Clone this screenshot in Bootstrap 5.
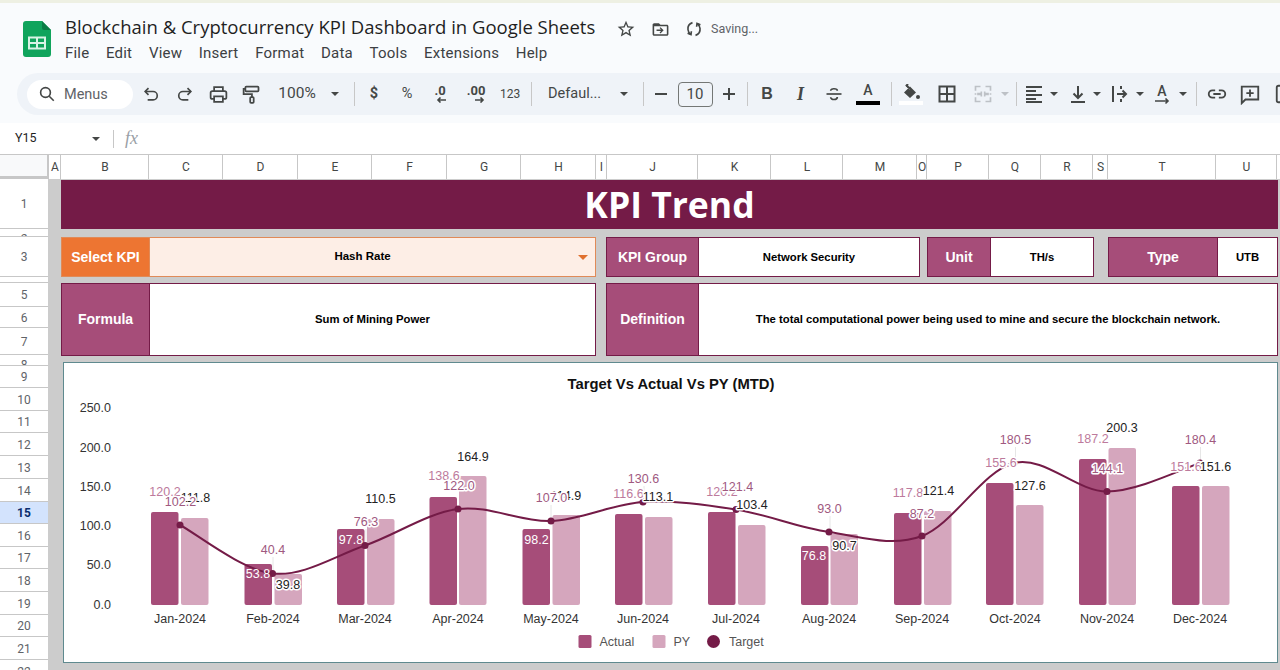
<!DOCTYPE html>
<html lang="en">
<head>
<meta charset="utf-8">
<title>Blockchain & Cryptocurrency KPI Dashboard</title>
<link href="https://cdn.jsdelivr.net/npm/bootstrap@5.3.0/dist/css/bootstrap.min.css" rel="stylesheet">
<style>
html,body{width:1280px;height:670px;overflow:hidden;background:#fff;}
body{font-family:Roboto,"Liberation Sans",sans-serif;color:#3c4043;}
svg{display:block;flex:none;}
.top-strip{height:3px;background:#eef0e3;}
.doc-head{height:120px;background:#f9fbfd;}
.head-row{height:70px;padding-left:23px;}
.logo-box{margin-top:18px;margin-right:14px;}
.title-col{padding-top:12px;}
.doc-title{font-family:"Open Sans",Roboto,sans-serif;font-size:18.5px;line-height:24px;width:531px;color:#1f1f1f;white-space:nowrap;}
.status{margin-left:20px;gap:15px;color:#444746;padding-top:4px;}
.saving{font-size:12.5px;color:#5f6368;margin-left:-7px;}
.menu-row{gap:16.7px;font-size:15px;letter-spacing:.2px;line-height:20px;margin-top:4px;color:#3c4043;}
.tool-strip{margin-left:17px;height:42px;padding-left:10px;background:#eff3f8;border-radius:21px 0 0 21px;display:grid;align-items:center;
 grid-template-columns:107px 34px 33px 34px 32px 60px 16px 22px 18px 48px 18px 54px 14px 29px 66px 24px 14px 21px 48px 20px 16px 24px 43px 24px 44px 2px 38px 34px 37px 8px 15px 20px 20px 27px 12px 34px 6px 38px 4px 23px 18px 48px 30px;}
.tcell{display:flex;justify-content:center;align-items:center;min-width:0;color:#444746;font-size:14.5px;white-space:nowrap;}
.search-pill{width:106px;height:29px;background:#fff;border-radius:15px;padding-left:11px;gap:8px;color:#5f6368;font-size:14.5px;justify-content:flex-start;}
.search-pill span{padding-top:1px;}
.tsep{width:1px;height:24px;background:#c7c7c7;justify-self:center;}
.pct{font-size:15.5px;}
.size-box{width:35px;height:25px;border:1px solid #747775;border-radius:4px;font-size:15px;display:flex;align-items:center;justify-content:center;}
.fnt-sm{font-size:12px;}
.fnt-a{font-size:14px;line-height:1;font-weight:500;}
.fnt-b{font-family:"Liberation Sans",sans-serif;font-weight:700;font-size:16px;}
.fnt-i{font-family:"Liberation Serif",serif;font-style:italic;font-weight:700;font-size:18px;}
.dec{font-weight:700;font-size:13px;line-height:12px;}
.defaul{justify-content:flex-start;padding-left:2px;font-size:14.5px;}
.caret{width:0;height:0;border-left:4.5px solid transparent;border-right:4.5px solid transparent;border-top:4.5px solid #444746;}
.caret.off{border-top-color:#bdc1c6;}
.fbar{height:31px;background:#fff;padding-left:15px;font-size:12.5px;color:#1f1f1f;}
.name-box{width:77px;}
.fbar-sep{width:1px;height:18px;background:#c7c7c7;margin-left:13px;margin-right:11px;}
.fx{font-family:"Liberation Serif",serif;font-style:italic;font-size:18px;color:#9aa0a6;}
.col-head{height:25px;border-top:1px solid #c7c7c7;display:grid;background:#fff;
 grid-template-columns:49px 12px 88px 74px 75px 74px 75px 74px 75px 11px 91px 73px 72px 74px 10px 62px 52px 52px 15px 108px 61px 3px;}
.col-cell{border-right:1px solid #c7c7c7;padding-left:1px;font-size:12px;color:#444746;display:flex;align-items:center;justify-content:center;}
.corner{background:#f8f9fa;border-right:2px solid #c7c7c7;border-bottom:3px solid #c7c7c7;}
.sheet{height:492px;background:#ccc;}
.row-head{width:48px;flex:none;background:#fff;display:grid;
 grid-template-rows:50px 8px 40px 6px 24px 21px 27px 11px 22px 23px 22px 23px 23px 23px 22px 23px 22px 23px 23px 22px 23px 23px;}
.row-cell{border-bottom:1px solid #c7c7c7;padding-top:1px;font-size:12px;line-height:14px;color:#5f6368;display:flex;align-items:center;justify-content:center;overflow:hidden;}
.row-cell.tiny{align-items:flex-start;padding-top:3px;}
.row-cell.now{background:#d3e3fd;color:#0b2e6e;font-weight:700;}
.sheet-body{padding-left:13px;padding-right:2px;padding-top:1px;width:1232px;}
.kpi-title{height:49px;background:#741b47;color:#fff;font-family:"Open Sans",sans-serif;font-weight:700;font-size:35.5px;line-height:49px;text-align:center;}
.kpi-row1{height:40px;margin-top:8px;}
.kpi-row2{height:73px;margin-top:6px;}
.tag{background:#a64d79;color:#fff;font-family:"Liberation Sans",sans-serif;font-weight:700;font-size:14px;display:flex;align-items:center;justify-content:center;border:1px solid #741b47;border-right:0;}
.val{background:#fff;color:#000;font-family:"Liberation Sans",sans-serif;font-weight:700;font-size:11.3px;display:flex;align-items:center;justify-content:center;border:1px solid #741b47;}
.tag.sel{background:#ed7532;border-color:#e08a58;}
.val.sel{background:#fdeee6;border-color:#e08a58;padding-right:20px;font-size:11.5px;}
.w-88{width:88px;flex:none}.w-447{width:447px;flex:none}.w-92{width:92px;flex:none}.w-222{width:222px;flex:none}
.w-63{width:63px;flex:none}.w-104{width:104px;flex:none}.w-109{width:109px;flex:none}.w-61{width:61px;flex:none}.w-580{width:580px;flex:none}
.gap-10{margin-left:10px}.gap-7{margin-left:7px}.gap-14{margin-left:14px}
.dd-arrow{width:0;height:0;border-left:5px solid transparent;border-right:5px solid transparent;border-top:5px solid #e0702e;}
.dd-hold{position:absolute;right:7px;top:17px;}
.chart-box{height:301px;margin-top:6px;margin-left:2px;background:#fff;border:1px solid #5f8a8f;overflow:hidden;}
.chart-box text{font-family:"Liberation Sans",sans-serif;font-size:12.5px;}
.chart-box .c-title{font-weight:700;font-size:14.8px;fill:#111;}
.chart-box .tick{fill:#333;}
.chart-box .leg{fill:#555;}
.bar-a{fill:#a64d79;}.bar-p{fill:#d5a6bd;}
.lb{text-anchor:middle;dominant-baseline:central;paint-order:stroke;stroke:#fff;stroke-width:3px;stroke-linejoin:round;}
.lb-a{fill:#bd7a9c;}.lb-t{fill:#a0597f;}.lb-p{fill:#222;}
.lb-w{fill:#fff;stroke:none;}
.lead{stroke:#e6e6e6;stroke-width:1;}
</style>
</head>
<body>
<div class="top-strip"></div>
<header class="doc-head">
  <div class="head-row d-flex">
    <div class="logo-box">
      <svg width="28" height="36" viewBox="0 0 28 36"><path d="M3 0H19L28 9V33a3 3 0 0 1-3 3H3a3 3 0 0 1-3-3V3a3 3 0 0 1 3-3z" fill="#10a45c"/><path d="M19 0L28 9H21a2 2 0 0 1-2-2z" fill="#0b7c45"/><rect x="6" y="16.5" width="16" height="11" fill="none" stroke="#d9f3e5" stroke-width="2"/><path d="M6 22H22M14 16.5V27.5" stroke="#d9f3e5" stroke-width="2"/></svg>
    </div>
    <div class="title-col">
      <div class="d-flex align-items-center">
        <div class="doc-title">Blockchain &amp; Cryptocurrency KPI Dashboard in Google Sheets</div>
        <div class="status d-flex align-items-center">
          <svg width="20" height="20" viewBox="0 0 24 24" fill="currentColor"><path d="M22 9.24l-7.19-.62L12 2 9.19 8.63 2 9.24l5.46 4.73L5.82 21 12 17.27 18.18 21l-1.63-7.03L22 9.24zM12 15.4l-3.76 2.27 1-4.28-3.32-2.88 4.38-.38L12 6.1l1.71 4.04 4.38.38-3.32 2.88 1 4.28L12 15.4z"/></svg>
          <svg width="19" height="19" viewBox="0 0 24 24" fill="currentColor"><path d="M20 6h-8l-2-2H4c-1.1 0-2 .9-2 2v12c0 1.1.9 2 2 2h16c1.1 0 2-.9 2-2V8c0-1.1-.9-2-2-2zm0 12H4V8h16v10z"/><path d="M12 9l-1.2 1.2 1.9 1.9H7v1.8h5.7l-1.9 1.9L12 17l4-4z"/></svg>
          <svg width="18" height="18" viewBox="0 0 24 24" fill="none" stroke="currentColor" stroke-width="2.2"><path d="M10 3.5C5.5 5 3.5 9 4 13c.3 2.5 1.5 4.5 3.500 6"/><path d="M3.500 17.500l4.500 2 .5-4.500"/><path d="M14 20.500c4.500-1.500 6.500-5.500 6-9.500-.3-2.500-1.500-4.500-3.500-6"/><path d="M20.500 6.500L16 4.500 15.500 9"/></svg>
          <span class="saving">Saving...</span>
        </div>
      </div>
      <nav class="menu-row d-flex">
        <span>File</span><span>Edit</span><span>View</span><span>Insert</span><span>Format</span><span>Data</span><span>Tools</span><span>Extensions</span><span>Help</span>
      </nav>
    </div>
  </div>
  <div class="tool-strip">
    <div class="tcell search-pill">
      <svg width="18" height="18" viewBox="0 0 24 24" fill="none" stroke="#444746" stroke-width="2.200"><circle cx="10" cy="10" r="6.500"/><path d="M15 15l6 6"/></svg><span>Menus</span>
    </div>
    <div class="tcell"><svg width="20" height="20" viewBox="0 0 24 24" fill="none" stroke="currentColor" stroke-width="2"><path d="M5 9h9.500a5 5 0 0 1 0 10H8"/><path d="M9 5L5 9l4 4"/></svg></div>
    <div class="tcell"><svg width="20" height="20" viewBox="0 0 24 24" fill="none" stroke="currentColor" stroke-width="2"><path d="M19 9H9.500a5 5 0 0 0 0 10H16"/><path d="M15 5l4 4-4 4"/></svg></div>
    <div class="tcell"><svg width="21" height="21" viewBox="0 0 24 24" fill="none" stroke="currentColor" stroke-width="2"><path d="M7 8V3.500h10V8"/><rect x="3" y="8" width="18" height="9" rx="2"/><path d="M7 14h10v6.500H7z" fill="#eff3f8"/></svg></div>
    <div class="tcell"><svg width="21" height="21" viewBox="0 0 24 24" fill="none" stroke="currentColor" stroke-width="2"><rect x="5" y="3" width="15" height="5.500" rx="1"/><path d="M5 5.500H3v6h9.500v3.500"/><rect x="10.500" y="15" width="4" height="6.500" rx="1"/></svg></div>
    <div class="tcell pct">100%</div>
    <div class="tcell"><span class="caret"></span></div>
    <div class="tsep"></div>
    <div class="tcell fw-bold">$</div>
    <div class="tcell">%</div>
    <div class="tcell"><span class="d-flex flex-column align-items-end"><span class="dec">.0</span><svg width="10" height="6" viewBox="0 0 10 6" fill="none" stroke="#444746" stroke-width="1.600"><path d="M10 3H2M4.500 .5L2 3l2.500 2.500"/></svg></span></div>
    <div class="tcell"><span class="d-flex flex-column align-items-end"><span class="dec">.00</span><svg width="10" height="6" viewBox="0 0 10 6" fill="none" stroke="#444746" stroke-width="1.600"><path d="M0 3h8M5.500 .5L8 3 5.500 5.500"/></svg></span></div>
    <div class="tcell fnt-sm">123</div>
    <div class="tsep"></div>
    <div class="tcell defaul">Defaul...</div>
    <div class="tcell"><span class="caret"></span></div>
    <div class="tsep"></div>
    <div class="tcell"><svg width="14" height="14" viewBox="0 0 14 14" stroke="currentColor" stroke-width="2"><path d="M1 7h12"/></svg></div>
    <div class="tcell"><span class="size-box">10</span></div>
    <div class="tcell"><svg width="14" height="14" viewBox="0 0 14 14" stroke="currentColor" stroke-width="2"><path d="M1 7h12M7 1v12"/></svg></div>
    <div class="tsep"></div>
    <div class="tcell fnt-b">B</div>
    <div class="tcell fnt-i">I</div>
    <div class="tcell"><svg width="20" height="20" viewBox="0 0 24 24" fill="none" stroke="currentColor" stroke-width="2"><path d="M3 12h18"/><path d="M16 8c0-2.500-8-3.500-8 0M8 16c0 3.500 8 3.500 8-.5"/></svg></div>
    <div class="tcell flex-column"><span class="fnt-a">A</span><svg class="mt-1" width="24" height="4" viewBox="0 0 24 4"><rect width="24" height="4" fill="#000"/></svg></div>
    <div class="tsep"></div>
    <div class="tcell flex-column"><svg width="20" height="17" viewBox="0 0 20 17" fill="currentColor"><path d="M3 8.500L9 2.500l6 6-6 5.500zM6 1L4.800 2l4 4"/><path d="M7 0l-1.400 1.400 3 3" fill="none" stroke="currentColor" stroke-width="2"/><circle cx="17" cy="13" r="2"/></svg><svg width="24" height="4" viewBox="0 0 24 4"><rect width="24" height="4" fill="#fff"/></svg></div>
    <div class="tcell"><svg width="20" height="20" viewBox="0 0 20 20" fill="none" stroke="currentColor" stroke-width="2"><rect x="2.500" y="2.500" width="15" height="15"/><path d="M10 2.500v15M2.500 10h15"/></svg></div>
    <div class="tcell"><svg width="20" height="20" viewBox="0 0 24 24" fill="none" stroke="#bdc1c6" stroke-width="2"><path d="M9 3H3v5M3 11v2M3 16v5h6M15 3h6v5M21 11v2M21 16v5h-6M10 9v2.500H5M10 15v-2.500H5M14 9v2.500h5M14 15v-2.500h5"/></svg></div>
    <div class="tcell"><span class="caret off"></span></div>
    <div class="tsep"></div>
    <div class="tcell"><svg width="18" height="18" viewBox="0 0 18 18" stroke="currentColor" stroke-width="2"><path d="M1 2h16M1 6h10M1 10h16M1 14h10M1 17h16"/></svg></div>
    <div class="tcell"><span class="caret"></span></div>
    <div class="tcell"><svg width="20" height="20" viewBox="0 0 20 20" fill="none" stroke="currentColor" stroke-width="2"><path d="M10 2v12M5.500 9.500L10 14l4.500-4.500M3 18h14"/></svg></div>
    <div class="tcell"><span class="caret"></span></div>
    <div class="tcell"><svg width="20" height="20" viewBox="0 0 20 20" fill="none" stroke="currentColor" stroke-width="2"><path d="M3 2v16M11 2v3M11 15v3M7 10h9M12.500 6.500L16 10l-3.500 3.500"/></svg></div>
    <div class="tcell"><span class="caret"></span></div>
    <div class="tcell"><span class="d-flex flex-column align-items-center"><span class="fnt-a">A</span><svg width="18" height="7" viewBox="0 0 18 7" fill="none" stroke="#444746" stroke-width="1.600"><path d="M2 3h13M12.500 .5L15 3l-2.500 2.500"/></svg></span></div>
    <div class="tcell"><span class="caret"></span></div>
    <div class="tsep"></div>
    <div class="tcell"><svg width="22" height="22" viewBox="0 0 24 24" fill="none" stroke="currentColor" stroke-width="2"><path d="M10 8H7a4 4 0 0 0 0 8h3M14 8h3a4 4 0 0 1 0 8h-3M8 12h8"/></svg></div>
    <div class="tcell"><svg width="22" height="22" viewBox="0 0 24 24" fill="none" stroke="currentColor" stroke-width="2"><path d="M3 4h18v14H7l-4 4z"/><path d="M12 7v8M8 11h8"/></svg></div>
    <div class="tcell justify-content-start"><svg width="22" height="22" viewBox="0 0 24 24" fill="none" stroke="currentColor" stroke-width="2"><rect x="3" y="3" width="18" height="18" rx="2"/></svg></div>
  </div>
</header>
<div class="fbar d-flex align-items-center">
  <span class="name-box">Y15</span>
  <span class="caret"></span>
  <span class="fbar-sep"></span>
  <span class="fx">fx</span>
</div>
<div class="col-head">
  <div class="corner"></div>
  <div class="col-cell">A</div><div class="col-cell">B</div><div class="col-cell">C</div><div class="col-cell">D</div><div class="col-cell">E</div><div class="col-cell">F</div><div class="col-cell">G</div><div class="col-cell">H</div><div class="col-cell">I</div><div class="col-cell">J</div><div class="col-cell">K</div><div class="col-cell">L</div><div class="col-cell">M</div><div class="col-cell">O</div><div class="col-cell">P</div><div class="col-cell">Q</div><div class="col-cell">R</div><div class="col-cell">S</div><div class="col-cell">T</div><div class="col-cell">U</div><div></div>
</div>
<main class="sheet d-flex">
  <div class="row-head">
    <div class="row-cell">1</div><div class="row-cell tiny">2</div><div class="row-cell">3</div><div class="row-cell tiny">4</div><div class="row-cell">5</div><div class="row-cell">6</div><div class="row-cell">7</div><div class="row-cell tiny">8</div><div class="row-cell">9</div><div class="row-cell">10</div><div class="row-cell">11</div><div class="row-cell">12</div><div class="row-cell">13</div><div class="row-cell">14</div><div class="row-cell now">15</div><div class="row-cell">16</div><div class="row-cell">17</div><div class="row-cell">18</div><div class="row-cell">19</div><div class="row-cell">20</div><div class="row-cell">21</div><div class="row-cell">22</div>
  </div>
  <div class="sheet-body">
    <div class="kpi-title">KPI Trend</div>
    <div class="kpi-row1 d-flex">
      <div class="tag sel w-88">Select KPI</div>
      <div class="val sel w-447 position-relative">Hash Rate<span class="dd-hold"><span class="dd-arrow d-block"></span></span></div>
      <div class="tag w-92 gap-10">KPI Group</div>
      <div class="val w-222">Network Security</div>
      <div class="tag w-63 gap-7">Unit</div>
      <div class="val w-104">TH/s</div>
      <div class="tag w-109 gap-14">Type</div>
      <div class="val w-61">UTB</div>
    </div>
    <div class="kpi-row2 d-flex">
      <div class="tag w-88">Formula</div>
      <div class="val w-447">Sum of Mining Power</div>
      <div class="tag w-92 gap-10">Definition</div>
      <div class="val w-580">The total computational power being used to mine and secure the blockchain network.</div>
    </div>
    <div class="chart-box">
      <svg width="1213" height="299" viewBox="64 363 1213 299">
        <text class="c-title" x="671" y="389" text-anchor="middle">Target Vs Actual Vs PY (MTD)</text>
        <g class="tick" text-anchor="end">
          <text class="tick" x="111" y="412">250.0</text><text class="tick" x="111" y="452">200.0</text><text class="tick" x="111" y="491">150.0</text><text class="tick" x="111" y="530">100.0</text><text class="tick" x="111" y="569">50.0</text><text class="tick" x="111" y="609">0.0</text>
        </g>
        <g class="bar-a">
          <rect x="151" y="512" width="27.500" height="93" rx="2"/><rect x="244.500" y="564" width="27.500" height="41" rx="2"/><rect x="337" y="529" width="27.500" height="76" rx="2"/><rect x="429.500" y="497" width="27.500" height="108" rx="2"/><rect x="522.500" y="529" width="27.500" height="76" rx="2"/><rect x="615" y="514" width="27.500" height="91" rx="2"/><rect x="708" y="512" width="27.500" height="93" rx="2"/><rect x="801" y="546" width="27.500" height="59" rx="2"/><rect x="894" y="513" width="27.500" height="92" rx="2"/><rect x="986" y="483" width="27.500" height="122" rx="2"/><rect x="1079" y="459" width="27.500" height="146" rx="2"/><rect x="1172" y="486" width="27.500" height="119" rx="2"/>
        </g>
        <g class="bar-p">
          <rect x="181" y="518" width="27.500" height="87" rx="2"/><rect x="274.500" y="574" width="27.500" height="31" rx="2"/><rect x="367" y="519" width="27.500" height="86" rx="2"/><rect x="459" y="476" width="27.500" height="129" rx="2"/><rect x="552.500" y="515" width="27.500" height="90" rx="2"/><rect x="645" y="517" width="27.500" height="88" rx="2"/><rect x="738" y="525" width="27.500" height="80" rx="2"/><rect x="830.500" y="534" width="27.500" height="71" rx="2"/><rect x="924" y="511" width="27.500" height="94" rx="2"/><rect x="1016" y="505" width="27.500" height="100" rx="2"/><rect x="1108.500" y="448" width="27.500" height="157" rx="2"/><rect x="1202" y="486" width="27.500" height="119" rx="2"/>
        </g>
        <g class="lead">
          <path d="M273 557V572M366 529V543M551 505V519M644 486V500M830 516V530M1015.500 447V461M1200.500 447V461"/>
        </g>
        <path d="M180 525C195.400 533 241.700 570.100 272.500 573.500C303.300 576.900 334.100 556.250 365 545.500C395.900 534.750 427 513.100 458 509C489 504.900 520.200 522.200 551 521C581.800 519.800 612.200 503.900 643 502C673.800 500.100 705 504.500 736 509.500C767 514.500 798 527.600 829 532C860 536.400 891.200 547.500 922 536C952.800 524.500 983.200 470.400 1014 463C1044.800 455.600 1076 491.500 1107 491.500C1138 491.500 1184.500 467.750 1200 463" fill="none" stroke="#741b47" stroke-width="2"/>
        <g fill="#741b47">
          <circle cx="180" cy="525" r="3.500"/><circle cx="272.500" cy="573.500" r="3.500"/><circle cx="365" cy="545.500" r="3.500"/><circle cx="458" cy="509" r="3.500"/><circle cx="551" cy="521" r="3.500"/><circle cx="643" cy="502" r="3.500"/><circle cx="736" cy="509.500" r="3.500"/><circle cx="829" cy="532" r="3.500"/><circle cx="922" cy="536" r="3.500"/><circle cx="1014" cy="463" r="3.500"/><circle cx="1107" cy="491.500" r="3.500"/><circle cx="1200" cy="463" r="3.500"/>
        </g>
        <g>
          <text class="lb lb-a" x="165" y="492">120.2</text><text class="lb lb-w" x="258" y="574">53.8</text><text class="lb lb-w" x="351" y="540">97.8</text><text class="lb lb-a" x="444" y="476">138.6</text><text class="lb lb-w" x="536.500" y="540">98.2</text><text class="lb lb-a" x="628.500" y="494">116.6</text><text class="lb lb-a" x="722" y="492">120.2</text><text class="lb lb-w" x="814" y="556">76.8</text><text class="lb lb-a" x="908" y="493">117.8</text><text class="lb lb-a" x="1001" y="463">155.6</text><text class="lb lb-a" x="1093" y="439">187.2</text><text class="lb lb-a" x="1186" y="467">151.6</text>
          <text class="lb lb-p" x="195.500" y="498">111.8</text><text class="lb lb-p" x="288" y="585">39.8</text><text class="lb lb-p" x="380.500" y="499">110.5</text><text class="lb lb-p" x="473" y="456.500">164.9</text><text class="lb lb-p" x="566" y="496">114.9</text><text class="lb lb-p" x="658" y="497">113.1</text><text class="lb lb-p" x="752" y="505">103.4</text><text class="lb lb-p" x="844.500" y="545.500">90.7</text><text class="lb lb-p" x="938.500" y="491">121.4</text><text class="lb lb-p" x="1030" y="486">127.6</text><text class="lb lb-p" x="1122" y="428">200.3</text><text class="lb lb-p" x="1215.500" y="467">151.6</text>
          <text class="lb lb-t" x="180.500" y="502">102.2</text><text class="lb lb-t" x="273" y="550">40.4</text><text class="lb lb-t" x="366" y="522">76.3</text><text class="lb lb-t" x="459" y="486">122.0</text><text class="lb lb-t" x="551.500" y="498">107.0</text><text class="lb lb-t" x="643.500" y="479">130.6</text><text class="lb lb-t" x="737.500" y="487">121.4</text><text class="lb lb-t" x="829.500" y="509">93.0</text><text class="lb lb-t" x="922" y="514">87.2</text><text class="lb lb-t" x="1015.500" y="440">180.5</text><text class="lb lb-t" x="1107.500" y="469">144.1</text><text class="lb lb-t" x="1200.500" y="440">180.4</text>
        </g>
        <g>
          <text class="tick" x="180" y="623" text-anchor="middle">Jan-2024</text><text class="tick" x="273" y="623" text-anchor="middle">Feb-2024</text><text class="tick" x="365" y="623" text-anchor="middle">Mar-2024</text><text class="tick" x="458" y="623" text-anchor="middle">Apr-2024</text><text class="tick" x="551" y="623" text-anchor="middle">May-2024</text><text class="tick" x="643" y="623" text-anchor="middle">Jun-2024</text><text class="tick" x="736" y="623" text-anchor="middle">Jul-2024</text><text class="tick" x="829" y="623" text-anchor="middle">Aug-2024</text><text class="tick" x="922" y="623" text-anchor="middle">Sep-2024</text><text class="tick" x="1015" y="623" text-anchor="middle">Oct-2024</text><text class="tick" x="1107" y="623" text-anchor="middle">Nov-2024</text><text class="tick" x="1200" y="623" text-anchor="middle">Dec-2024</text>
        </g>
        <rect class="bar-a" x="578.500" y="635" width="13" height="13" rx="1.500"/><text class="leg" x="599.500" y="645.500">Actual</text>
        <rect class="bar-p" x="652.500" y="635" width="13" height="13" rx="1.500"/><text class="leg" x="673.500" y="645.500">PY</text>
        <circle cx="713.500" cy="641.500" r="6.500" fill="#741b47"/><text class="leg" x="729" y="645.500">Target</text>
      </svg>
    </div>
  </div>
</main>
</body>
</html>
